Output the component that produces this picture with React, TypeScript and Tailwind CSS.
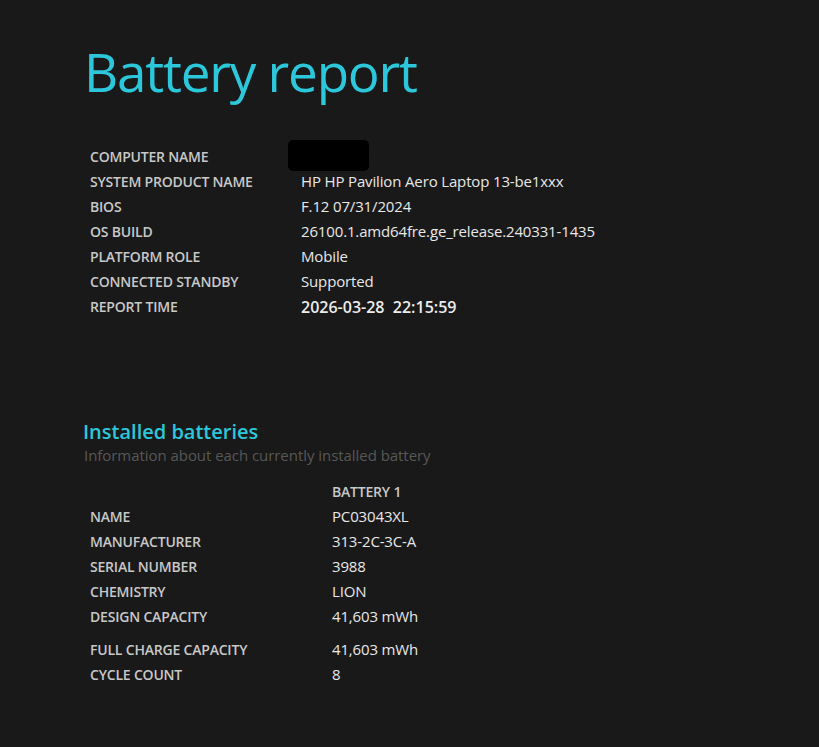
import React from 'react';

const systemRows: [string, string][] = [
  ['SYSTEM PRODUCT NAME', 'HP HP Pavilion Aero Laptop 13-be1xxx'],
  ['BIOS', 'F.12 07/31/2024'],
  ['OS BUILD', '26100.1.amd64fre.ge_release.240331-1435'],
  ['PLATFORM ROLE', 'Mobile'],
  ['CONNECTED STANDBY', 'Supported'],
];

const batteryRows: [string, string][] = [
  ['NAME', 'PC03043XL'],
  ['MANUFACTURER', '313-2C-3C-A'],
  ['SERIAL NUMBER', '3988'],
  ['CHEMISTRY', 'LION'],
  ['DESIGN CAPACITY', '41,603 mWh'],
];

function Label({ children }: { children: React.ReactNode }) {
  return <div className="text-[14px] font-semibold text-[#c8c8c8] tracking-[-0.2px]">{children}</div>;
}

function Value({ children }: { children: React.ReactNode }) {
  return <div className="text-[15px] text-[#e8e8e8] tracking-[-0.15px]">{children}</div>;
}

export default function App() {
  return (
    <div
      className="w-[819px] h-[747px] bg-[#191919] overflow-hidden"
      style={{ fontFamily: '"Open Sans", "Noto Sans", sans-serif' }}
    >
      <div className="pl-[84px] pt-[36px]">
        <h1 className="text-[53px] leading-[72px] text-[#2cc7da] tracking-[-1.2px]">Battery report</h1>

        <div className="mt-[36px] pl-[6px] grid grid-cols-[211px_1fr] auto-rows-[25px] items-center">
          <Label>COMPUTER NAME</Label>
          <div className="-ml-[13px]">
            <div className="w-[81px] h-[31px] -mt-[2px] rounded-[5px] bg-black" />
          </div>
          {systemRows.map(([k, v]) => (
            <React.Fragment key={k}>
              <Label>{k}</Label>
              <Value>{v}</Value>
            </React.Fragment>
          ))}
          <Label>REPORT TIME</Label>
          <div className="text-[16px] font-semibold text-[#ececec]">2026-03-28&nbsp;&nbsp;22:15:59</div>
        </div>

        <h2 className="mt-[100px] -ml-[1px] text-[20px] font-semibold leading-[26px] text-[#2cc7da]">
          Installed batteries
        </h2>
        <div className="text-[15px] leading-[20px] text-[#575757] tracking-[-0.05px]">
          Information about each currently installed battery
        </div>

        <div className="mt-[14px] pl-[6px] grid grid-cols-[242px_1fr] auto-rows-[25px] items-center">
          <div />
          <Label>BATTERY 1</Label>
          {batteryRows.map(([k, v]) => (
            <React.Fragment key={k}>
              <Label>{k}</Label>
              <Value>{v}</Value>
            </React.Fragment>
          ))}
        </div>
        <div className="mt-[8px] pl-[6px] grid grid-cols-[242px_1fr] auto-rows-[25px] items-center">
          <Label>FULL CHARGE CAPACITY</Label>
          <Value>41,603 mWh</Value>
          <Label>CYCLE COUNT</Label>
          <Value>8</Value>
        </div>
      </div>
    </div>
  );
}
